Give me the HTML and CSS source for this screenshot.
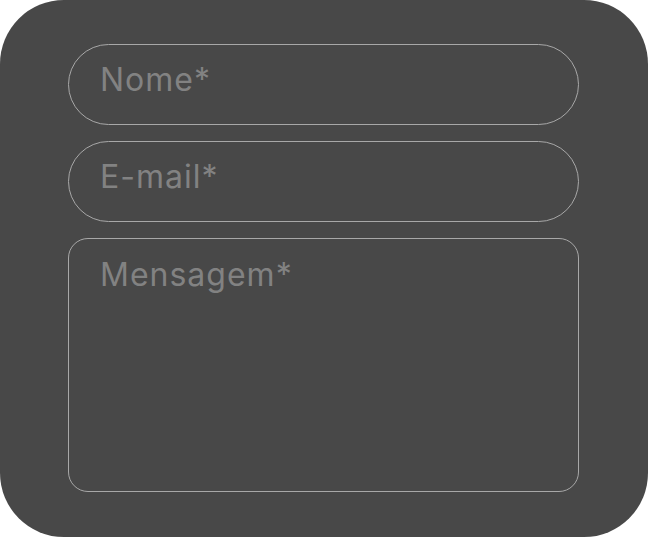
FILE: index.html
```html
<!DOCTYPE html>
<html lang="pt">
<head>
  <meta charset="UTF-8">
  <meta name="viewport" content="width=device-width, initial-scale=1.0">
  <title>Contato</title>
  <link rel="stylesheet" href="styles.css">
</head>
<body>

<div class="container">
  <form class="contact-form" id="contactForm">
    <input type="text" class="field" name="nome" placeholder="Nome*" required>
    <input type="email" class="field" name="email" placeholder="E-mail*" required>
    <textarea class="field field-message" name="mensagem" placeholder="Mensagem*" required></textarea>
  </form>
</div>

</body>
</html>
```

FILE: styles.css
```css
body {
  margin: 0;
  padding: 0;
  background-color: #fff;
  font-family: Inter, "Noto Sans", sans-serif;
}

.container {
  box-sizing: border-box;
  width: 648px;
  height: 537px;
  padding: 44px 69px 45px 68px;
  background-color: #484848;
  border-radius: 64px;
}

.contact-form {
  display: flex;
  flex-direction: column;
  gap: 16px;
  height: 100%;
}

.field {
  box-sizing: border-box;
  width: 100%;
  height: 81px;
  padding: 0 31px 11px;
  border: 1px solid #a8a8a8;
  border-radius: 41px;
  background: transparent;
  color: #ddd;
  font-family: Inter, "Noto Sans", sans-serif;
  font-size: 32px;
  letter-spacing: 1px;
  outline: none;
}

.field::placeholder {
  color: #828282;
}

.field-message {
  flex: 1;
  height: auto;
  padding: 16px 31px;
  border-radius: 20px;
  resize: none;
}
```
